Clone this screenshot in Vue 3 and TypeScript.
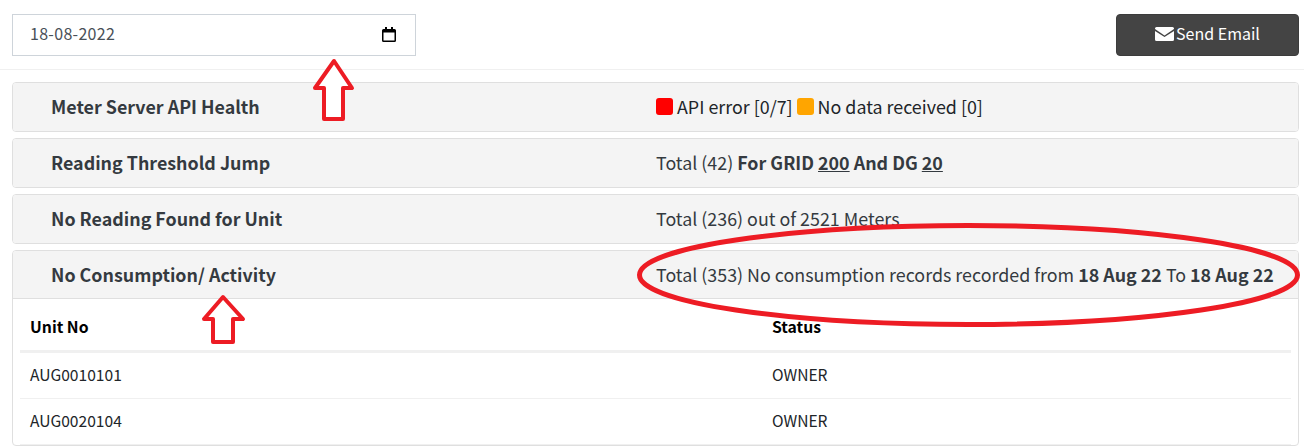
<script setup lang="ts">
interface Row { unit: string; status: string }
const rows: Row[] = [
  { unit: 'AUG0010101', status: 'OWNER' },
  { unit: 'AUG0020104', status: 'OWNER' },
]
</script>

<template>
  <div class="page">
    <header class="top">
      <div class="date">
        <span>18-08-2022</span>
        <svg width="14" height="15" viewBox="0 0 14 15" class="cal">
          <path d="M3 0h2v2h4V0h2v2h1.500A1.500 1.500 0 0 1 14 3.500V13.500A1.500 1.500 0 0 1 12.500 15H1.500A1.500 1.500 0 0 1 0 13.500V3.500A1.500 1.500 0 0 1 1.500 2H3ZM1.500 5.500v8h11v-8Z" fill="#000" fill-rule="evenodd"/>
        </svg>
      </div>
      <button class="send">
        <svg class="env" width="19" height="14" viewBox="0 0 19 14">
          <path d="M1.500 0h16A1.500 1.500 0 0 1 19 1.500v.6L9.500 8.400 0 2.100v-.6A1.500 1.500 0 0 1 1.500 0Z" fill="#fff"/>
          <path d="M0 3.900l9.500 6.200L19 3.900v8.600a1.500 1.500 0 0 1-1.500 1.500h-16A1.500 1.500 0 0 1 0 12.500Z" fill="#fff"/>
        </svg>
        <span>Send Email</span>
      </button>
    </header>

    <section class="panels">
      <div class="panel">
        <div class="head">
          <h3>Meter Server API Health</h3>
          <p class="dark"><i class="sq red"></i> API error [0/7] <i class="sq orange"></i> No data received [0]</p>
        </div>
      </div>
      <div class="panel">
        <div class="head">
          <h3>Reading Threshold Jump</h3>
          <p>Total (42) <b>For GRID <u>200</u> And DG <u>20</u></b></p>
        </div>
      </div>
      <div class="panel">
        <div class="head">
          <h3>No Reading Found for Unit</h3>
          <p>Total (236) out of 2521 Meters</p>
        </div>
      </div>
      <div class="panel open">
        <div class="head">
          <h3>No Consumption/ Activity</h3>
          <p>Total (353) No consumption records recorded from <b>18 Aug 22</b> To <b>18 Aug 22</b></p>
        </div>
        <table>
          <thead>
            <tr><th>Unit No</th><th>Status</th></tr>
          </thead>
          <tbody>
            <tr v-for="r in rows" :key="r.unit"><td>{{ r.unit }}</td><td>{{ r.status }}</td></tr>
          </tbody>
        </table>
      </div>
    </section>

    <svg class="marks" width="1304" height="448" viewBox="0 0 1304 448">
      <g fill="#fff" stroke="#ed1c24" stroke-width="4" stroke-linejoin="round">
        <path d="M334 61 L352 88 H343 V119 H324 V88 H315 Z" />
        <path d="M223 297 L243 319 H233 V342 H213 V319 H204 Z" />
      </g>
      <ellipse cx="968.500" cy="275" rx="329" ry="49.500" fill="none" stroke="#ed1c24" stroke-width="5"/>
    </svg>
  </div>
</template>

<style>
html, body { margin: 0; background: #fff; }
</style>

<style scoped>
.page {
  position: relative;
  width: 1304px;
  height: 448px;
  overflow: hidden;
  font-family: "Noto Sans CJK SC", "Noto Sans", sans-serif;
  font-size: 17.880px;
  color: #343a40;
}
.top {
  display: flex;
  justify-content: space-between;
  align-items: flex-start;
  box-sizing: border-box;
  height: 70px;
  padding: 14px 5px 0 12px;
  border-bottom: 1px solid #f0f0f0;
}
.date {
  box-sizing: border-box;
  width: 404px;
  height: 42px;
  display: flex;
  align-items: center;
  justify-content: space-between;
  padding: 0 19px 0 17px;
  border: 1px solid #ced4da;
  font-size: 16px;
  letter-spacing: 0.300px;
  color: #495057;
}
.date span { margin-bottom: 5px; }
.cal { margin-bottom: 2px; }
.send {
  box-sizing: border-box;
  width: 183px;
  height: 42px;
  display: flex;
  align-items: center;
  justify-content: center;
  gap: 2px;
  background: #444;
  color: #fff;
  border: 1px solid #3c3c3c;
  border-radius: 4px;
  font: inherit;
  font-size: 16px;
  padding: 0;
}
.send span { margin-bottom: 5px; }
.env { margin-bottom: 2px; }
.panels {
  display: flex;
  flex-direction: column;
  gap: 6px;
  padding: 12px 5px 0 12px;
}
.panel {
  border: 1px solid #dfdfdf;
  border-radius: 4px;
  background: #fff;
}
.head {
  box-sizing: border-box;
  height: 48px;
  display: grid;
  grid-template-columns: 643px 1fr;
  align-items: center;
  padding-bottom: 2px;
  background: #f4f4f4;
  border-radius: 3px;
}
.open .head {
  border-bottom: 1px solid #dfdfdf;
  border-radius: 3px 3px 0 0;
}
h3 {
  margin: 0;
  padding-left: 38px;
  font-size: 17.880px;
  font-weight: 700;
  color: #343a40;
}
p {
  margin: 0;
  white-space: nowrap;
}
.dark { color: #212529; }
b { font-weight: 700; }
.sq {
  display: inline-block;
  width: 17px;
  height: 17px;
  border-radius: 3px;
  vertical-align: -1px;
}
.red { background: #ff0000; }
.orange { background: #ffa500; }
table {
  width: 1271px;
  margin-left: 7px;
  border-collapse: separate;
  border-spacing: 0;
  table-layout: fixed;
  font-size: 15.600px;
  line-height: 1;
  color: #212529;
}
th {
  box-sizing: border-box;
  height: 54px;
  padding: 4px 10px 0;
  text-align: left;
  font-weight: 700;
  color: #000;
  border-bottom: 3px solid #f0f0f0;
  font-size: 15.750px;
}
td {
  box-sizing: border-box;
  height: 46px;
  padding: 0 10px 1px;
  border-bottom: 1px solid #f0f0f0;
}
th:first-child, td:first-child { width: 742px; }
.marks {
  position: absolute;
  left: 0;
  top: 0;
  pointer-events: none;
}
</style>
